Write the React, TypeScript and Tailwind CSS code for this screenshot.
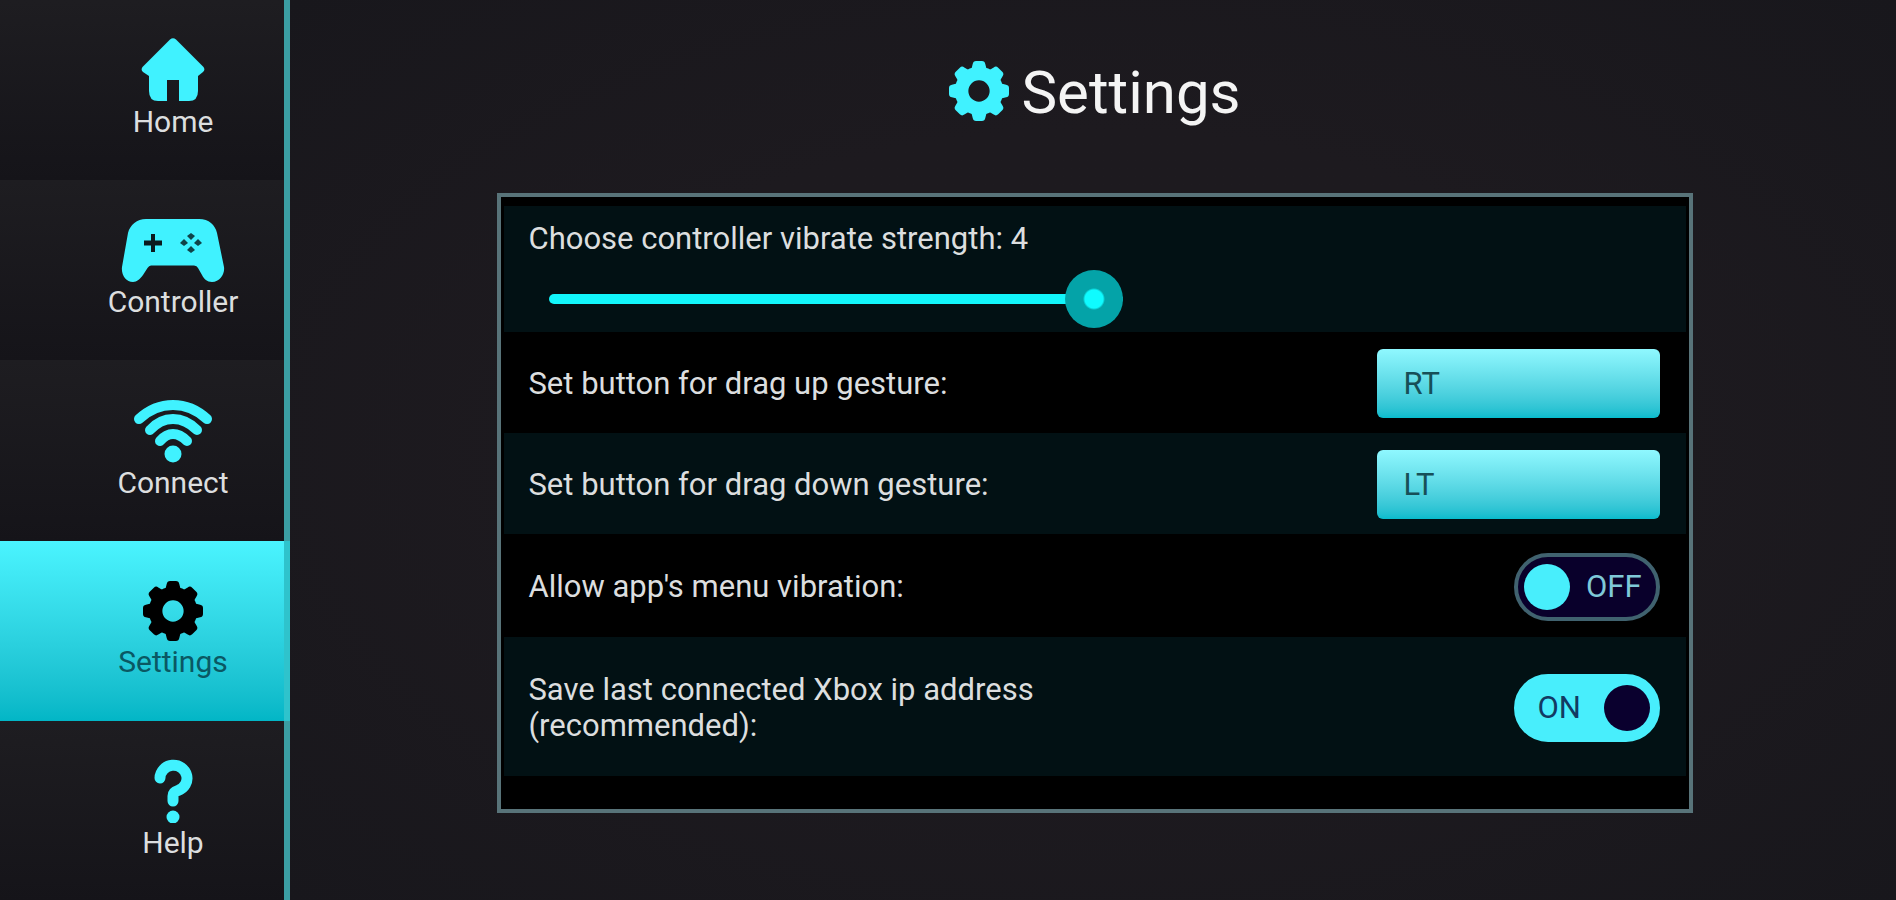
import { ReactNode, useState } from "react"

const BUTTONS = ["RT", "LT", "RB", "LB", "A", "B", "X", "Y"]

function HomeIcon() {
  return (
    <svg width="64" height="64" viewBox="0 0 64 64" fill="currentColor" aria-hidden="true">
      <path d="M29 1.500Q32-1 35 1.500L62.500 29Q64.500 32 62 34L57 38V53Q57 63 48 63H38V42H26V63H17Q8 63 8 53V38L2 34Q-.5 32 1.500 29Z" />
    </svg>
  )
}

function ControllerIcon() {
  return (
    <svg width="104" height="64" viewBox="0 0 104 64" fill="currentColor" aria-hidden="true">
      <path d="M25 1H78C88 1 94 7 96 15L103 49C104 56 99 64 91 64C86 64 83 61 81 57L77 50Q76 47.500 73 47.500H30Q28 47.500 26.500 50L22 57C19 61 16 64 12 64C5 64 0 57 1 49L7 15C9 7 16 1 25 1Z" />
      <path d="M30 16H34V22.500H41V27.500H34V34H30V27.500H23V22.500H30Z" className="text-[#0b1a1d]" />
      <g className="text-[#0f4348]">
        <path d="M70 15L74 18L70 22L66 18Z" />
        <path d="M70 28L74 32L70 35L66 32Z" />
        <path d="M63 21L67 25L63 28L59 25Z" />
        <path d="M77 21L81 25L77 28L73 25Z" />
      </g>
    </svg>
  )
}

function WifiIcon() {
  return (
    <svg width="80" height="64" viewBox="0 0 80 64" fill="none" stroke="currentColor" strokeWidth="10" strokeLinecap="round" aria-hidden="true">
      <path d="M6 20Q21 6 40 6T74 20" />
      <path d="M17 31Q27 20 40 20T64 31" />
      <path d="M27 42Q33 35 40 35T54 42" />
      <circle cx="40" cy="55" r="8.500" fill="currentColor" stroke="none" />
    </svg>
  )
}

function GearIcon() {
  return (
    <svg width="60" height="62" viewBox="-31 -32 62 64" fill="currentColor" aria-hidden="true">
      <circle r="18" fill="none" stroke="currentColor" strokeWidth="14" />
      {[0, 45, 90, 135, 180, 225, 270, 315].map(angle => (
        <path key={angle} d="M-8-22L-6.500-28Q-6-31-3-31H3Q6-31 6.500-28L8-22Z" transform={`rotate(${angle})`} />
      ))}
    </svg>
  )
}

function HelpIcon() {
  return (
    <svg width="40" height="64" viewBox="0 0 40 64" fill="none" stroke="currentColor" strokeWidth="11" strokeLinecap="round" aria-hidden="true">
      <path d="M7 19A13.500 13 0 1 1 25 31.500Q20 33 20 37V42" />
      <circle cx="20" cy="58" r="6.500" fill="currentColor" stroke="none" />
    </svg>
  )
}

const NAV = [
  { label: "Home", icon: <HomeIcon /> },
  { label: "Controller", icon: <ControllerIcon /> },
  { label: "Connect", icon: <WifiIcon /> },
  { label: "Settings", icon: <GearIcon /> },
  { label: "Help", icon: <HelpIcon /> },
]

function ButtonSelect({ id, value, onChange }: { id: string, value: string, onChange: (value: string) => void }) {
  return (
    <select
      id={id}
      value={value}
      onChange={e => onChange(e.target.value)}
      className="h-[69px] w-[283px] appearance-none rounded-md bg-linear-to-b from-[#8ff8ff] to-[#06bccd] px-[27px] text-[31px] text-[#174f58]"
    >
      {BUTTONS.map(name => <option key={name}>{name}</option>)}
    </select>
  )
}

function Toggle({ labelId, on, onChange }: { labelId: string, on: boolean, onChange: (on: boolean) => void }) {
  return (
    <button
      type="button"
      role="switch"
      aria-checked={on}
      aria-labelledby={labelId}
      onClick={() => onChange(!on)}
      className={`flex h-[68px] w-[146px] items-center justify-between rounded-full border-4 leading-8 ${on ? "flex-row-reverse border-[#48eefc] bg-[#48eefc] pr-[6px] pl-5 text-[#123a63]" : "border-[#40626f] bg-[#09002b] pr-[14px] pl-[6px] text-[#7fc9d8]"}`}
    >
      <span className={`size-[46px] rounded-full ${on ? "bg-[#0a002e]" : "bg-[#48eefc]"}`} />
      {on ? "ON" : "OFF"}
    </button>
  )
}

function Row({ className, children }: { className: string, children: ReactNode }) {
  return <div className={`flex items-center justify-between pt-[2px] pr-[26px] pl-6 ${className}`}>{children}</div>
}

export default function App() {
  const [page, setPage] = useState("Settings")
  const [strength, setStrength] = useState(4)
  const [dragUp, setDragUp] = useState("RT")
  const [dragDown, setDragDown] = useState("LT")
  const [menuVibration, setMenuVibration] = useState(false)
  const [saveIp, setSaveIp] = useState(true)

  return (
    <div className="flex min-h-screen bg-[#18171c] font-['Roboto',sans-serif] text-[#dcdedf]">
      <nav className="flex w-[290px] shrink-0 flex-col">
        {NAV.map(({ label, icon }) => (
          <button
            key={label}
            type="button"
            onClick={() => setPage(label)}
            aria-current={page === label ? "page" : undefined}
            className={`flex flex-1 flex-col items-center justify-center gap-1 border-r-[6px] bg-linear-to-b pb-1 pl-[62px] text-[30px] leading-8 ${page === label ? "border-[#2fc3cc] from-[#4af4ff] to-[#02b6c6] text-[#0a5863]" : "border-[#3b9ea3] from-[#1e1d21] to-[#151419]"}`}
          >
            <span className={page === label ? "text-black" : "text-[#40f2ff]"}>{icon}</span>
            {label}
          </button>
        ))}
      </nav>

      <main className="flex flex-1 flex-col items-center bg-radial from-[#1d1a1f] from-50% to-[#18171c] to-100% pt-[57px] pb-[88px] pl-1">
        <h1 className="mb-16 flex items-center gap-3 text-[60px] leading-[72px] text-[#f4f4f4]">
          <span className="pb-1 text-[#40f2ff]"><GearIcon /></span>
          Settings
        </h1>

        <section className="w-[74.6%] border-4 border-[#587379] bg-black px-[3px] pt-[9px] pb-[33px] text-[31px] leading-9">
          <div className="flex h-[126px] flex-col bg-[#021114] pt-[15px] pl-6">
            <label htmlFor="strength">Choose controller vibrate strength: {strength}</label>
            <input
              id="strength"
              type="range"
              min="0"
              max="4"
              value={strength}
              onChange={e => setStrength(Number(e.target.value))}
              className="mt-[13px] ml-[21px] h-[58px] w-[574px] appearance-none bg-transparent [&::-webkit-slider-runnable-track]:h-[10px] [&::-webkit-slider-runnable-track]:rounded-full [&::-webkit-slider-runnable-track]:bg-[#12f6fb] [&::-webkit-slider-thumb]:-mt-6 [&::-webkit-slider-thumb]:size-[58px] [&::-webkit-slider-thumb]:appearance-none [&::-webkit-slider-thumb]:rounded-full [&::-webkit-slider-thumb]:bg-[radial-gradient(circle,#0ffbff_9px,#04a3a8_11px)]"
            />
          </div>
          <Row className="h-[101px]">
            <label htmlFor="drag-up">Set button for drag up gesture:</label>
            <ButtonSelect id="drag-up" value={dragUp} onChange={setDragUp} />
          </Row>
          <Row className="h-[101px] bg-[#021114]">
            <label htmlFor="drag-down">Set button for drag down gesture:</label>
            <ButtonSelect id="drag-down" value={dragDown} onChange={setDragDown} />
          </Row>
          <Row className="h-[103px]">
            <span id="menu-vibration">Allow app's menu vibration:</span>
            <Toggle labelId="menu-vibration" on={menuVibration} onChange={setMenuVibration} />
          </Row>
          <Row className="h-[139px] bg-[#021114]">
            <span id="save-ip" className="max-w-[560px]">Save last connected Xbox ip address (recommended):</span>
            <Toggle labelId="save-ip" on={saveIp} onChange={setSaveIp} />
          </Row>
        </section>
      </main>
    </div>
  )
}
